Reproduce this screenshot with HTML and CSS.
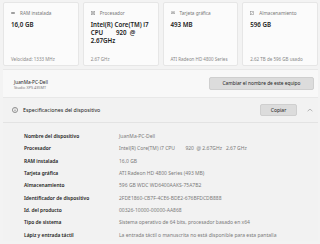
FILE: index.html
```html
<!DOCTYPE html>
<html lang="es">
<head>
<meta charset="utf-8">
<link rel="stylesheet" href="styles.css">
</head>
<body>
<div class="page">
  <div class="cards">
    <div class="card">
      <div class="card-label"><svg class="ci" viewBox="0 0 10 6"><rect x="0.5" y="1" width="9" height="4" fill="#888"/></svg>RAM instalada</div>
      <div class="card-value">16,0 GB</div>
      <div class="card-foot">Velocidad: 1333 MHz</div>
    </div>
    <div class="card">
      <div class="card-label"><svg class="ci" viewBox="0 0 8 8"><rect x="0.5" y="0.5" width="7" height="7" fill="none" stroke="#888"/><rect x="2.5" y="2.5" width="3" height="3" fill="#888"/></svg>Procesador</div>
      <div class="card-value">Intel(R) Core(TM) i7 CPU&nbsp;&nbsp;&nbsp;&nbsp;&nbsp;&nbsp;&nbsp;&nbsp;920&nbsp; @ 2.67GHz</div>
      <div class="card-foot">2.67 GHz</div>
    </div>
    <div class="card">
      <div class="card-label"><svg class="ci" viewBox="0 0 10 7"><rect x="0.5" y="0.5" width="9" height="5" fill="none" stroke="#888"/><rect x="2.5" y="2" width="5" height="2" fill="#888"/></svg>Tarjeta gráfica</div>
      <div class="card-value">493 MB</div>
      <div class="card-foot">ATI Radeon HD 4800 Series</div>
    </div>
    <div class="card">
      <div class="card-label"><svg class="ci" viewBox="0 0 8 8"><rect x="1" y="0.5" width="6" height="7" fill="none" stroke="#888"/><line x1="2.5" y1="5.5" x2="5.5" y2="2.5" stroke="#888"/></svg>Almacenamiento</div>
      <div class="card-value">596 GB</div>
      <div class="card-foot">2.62 TB de 596 GB usado</div>
    </div>
  </div>

  <div class="device">
    <div class="device-names">
      <div class="dev-name">JuanMa-PC-Dell</div>
      <div class="dev-model">Studio XPS 435MT</div>
    </div>
    <button class="btn btn-rename">Cambiar el nombre de este equipo</button>
  </div>

  <div class="specs">
    <div class="specs-head">
      <svg class="info" viewBox="0 0 10 10"><circle cx="5" cy="5" r="4.3" fill="none" stroke="#333" stroke-width="0.8"/><line x1="5" y1="4.3" x2="5" y2="7.3" stroke="#333" stroke-width="0.9"/><circle cx="5" cy="2.9" r="0.55" fill="#333"/></svg>
      <span class="specs-title">Especificaciones del dispositivo</span>
      <button class="btn btn-copy">Copiar</button>
      <svg class="chev" viewBox="0 0 10 6"><polyline points="1,5 5,1.5 9,5" fill="none" stroke="#777" stroke-width="0.8"/></svg>
    </div>
    <div class="specs-body">
      <div class="row"><span class="k">Nombre del dispositivo</span><span class="v">JuanMa-PC-Dell</span></div>
      <div class="row"><span class="k">Procesador</span><span class="v">Intel(R) Core(TM) i7 CPU&nbsp;&nbsp;&nbsp;&nbsp;&nbsp;&nbsp;&nbsp;&nbsp;920&nbsp; @ 2.67GHz&nbsp;&nbsp; 2.67 GHz</span></div>
      <div class="row"><span class="k">RAM instalada</span><span class="v">16,0 GB</span></div>
      <div class="row"><span class="k">Tarjeta gráfica</span><span class="v">ATI Radeon HD 4800 Series (493 MB)</span></div>
      <div class="row"><span class="k">Almacenamiento</span><span class="v">596 GB WDC WD6400AAKS-75A7B2</span></div>
      <div class="row"><span class="k">Identificador de dispositivo</span><span class="v">2FDE1860-CB7F-4CE6-BDE2-676BFDCDB888</span></div>
      <div class="row"><span class="k">Id. del producto</span><span class="v">00326-10000-00000-AA868</span></div>
      <div class="row"><span class="k">Tipo de sistema</span><span class="v">Sistema operativo de 64 bits, procesador basado en x64</span></div>
      <div class="row"><span class="k">Lápiz y entrada táctil</span><span class="v">La entrada táctil o manuscrita no está disponible para esta pantalla</span></div>
    </div>
  </div>
</div>
</body>
</html>
```

FILE: styles.css
```css
* { box-sizing: border-box; }
html, body {
  margin: 0;
  padding: 0;
  background: #f3f3f3;
  font-family: "Noto Sans", "Open Sans", sans-serif;
  color: #1b1b1b;
}
.page {
  width: 320px;
  height: 244px;
  overflow: hidden;
  padding: 2px 2px 0 3px;
}
.cards {
  display: grid;
  grid-template-columns: repeat(4, 1fr);
  gap: 4px;
  height: 64px;
}
.card {
  background: #fbfbfb;
  border: 1px solid #e6e6e6;
  border-radius: 2px;
  padding: 7px 5px 3px 7px;
  display: flex;
  flex-direction: column;
}
.card-label {
  font-size: 4.7px;
  color: #777;
  display: flex;
  align-items: center;
  gap: 5px;
  height: 6px;
}
.ci { width: 4px; height: 4px; flex: none; }
.card-value {
  margin-top: 5px;
  font-size: 6.2px;
  font-weight: 600;
  line-height: 8px;
  color: #1a1a1a;
}
.card-foot {
  margin-top: auto;
  font-size: 4.5px;
  color: #888;
  line-height: 6px;
}
.device {
  margin-top: 3px;
  height: 29px;
  background: #f8f8f8;
  border-top: 1px solid #e8e8e8;
  border-bottom: 1px solid #e8e8e8;
  display: flex;
  align-items: center;
  justify-content: space-between;
  padding: 2px 4px 0 11px;
}
.dev-name { font-size: 4.7px; line-height: 6.5px; color: #1a1a1a; }
.dev-model { font-size: 3.8px; line-height: 5px; color: #777; }
.btn {
  font-family: inherit;
  border: 1px solid #cfcfcf;
  background: #dcdcdc;
  color: #1a1a1a;
  border-radius: 2px;
  padding: 0;
  font-size: 4.8px;
}
.btn-rename { width: 105px; height: 13px; margin-top: -3px; }
.specs {
  background: #f2f2f2;
}
.specs-head {
  height: 25px;
  display: flex;
  align-items: center;
  padding: 0 5px 0 9px;
  border-bottom: 1px solid #e3e3e3;
}
.info { width: 6px; height: 6px; }
.specs-title { font-size: 5.3px; margin-left: 5px; flex: 1; }
.btn-copy { width: 37px; height: 12px; font-size: 5px; }
.chev { width: 6px; height: 4px; margin-left: 10px; }
.specs-body { padding: 7px 0 0 21px; }
.row {
  display: flex;
  height: 12.3px;
  align-items: center;
}
.k { width: 95px; font-size: 4.9px; font-weight: 600; color: #1b1b1b; }
.v { font-size: 5px; color: #7a7a7a; white-space: nowrap; }
```
